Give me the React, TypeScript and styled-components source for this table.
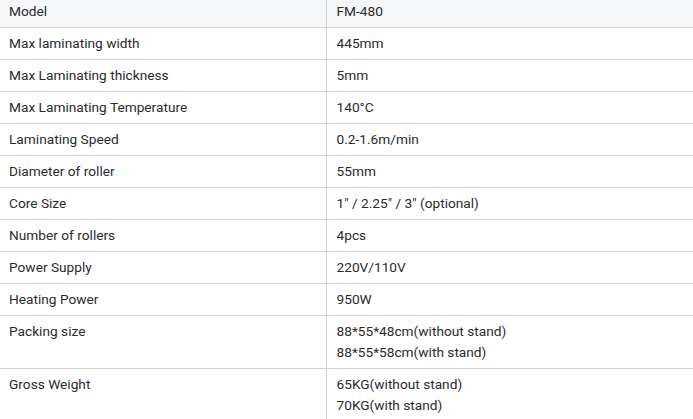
import React from "react";
import styled, { createGlobalStyle } from "styled-components";

const GlobalStyle = createGlobalStyle`
  html, body {
    margin: 0;
    padding: 0;
    background: #ffffff;
  }
  body {
    font-family: Roboto, "Liberation Sans", sans-serif;
    color: #2b2b2b;
    overflow: hidden;
  }
`;

const SpecTable = styled.table`
  width: 100%;
  margin-top: -4px;
  border-collapse: collapse;
  table-layout: fixed;
  font-size: 13.7px;
`;

const Row = styled.tr<{ $head?: boolean }>`
  background: ${(p) => (p.$head ? "#f5f6f8" : "#ffffff")};
  border-bottom: 1px solid #d3d3d3;
`;

const NameCell = styled.td`
  width: 326px;
  padding: 5px 10px 5px 9px;
  line-height: 21px;
  vertical-align: top;
  border-right: 1px solid #d3d3d3;
  box-sizing: border-box;
`;

const ValueCell = styled.td`
  padding: 5px 10px;
  line-height: 21px;
  vertical-align: top;
`;

const Line = styled.div``;

const specs: [string, string[]][] = [
  ["Model", ["FM-480"]],
  ["Max laminating width", ["445mm"]],
  ["Max Laminating thickness", ["5mm"]],
  ["Max Laminating Temperature", ["140°C"]],
  ["Laminating Speed", ["0.2-1.6m/min"]],
  ["Diameter of roller", ["55mm"]],
  ["Core Size", ['1" / 2.25" / 3" (optional)']],
  ["Number of rollers", ["4pcs"]],
  ["Power Supply", ["220V/110V"]],
  ["Heating Power", ["950W"]],
  ["Packing size", ["88*55*48cm(without stand)", "88*55*58cm(with stand)"]],
  ["Gross Weight", ["65KG(without stand)", "70KG(with stand)"]],
];

const App = () => {
  return (
    <>
      <GlobalStyle />
      <SpecTable>
        <tbody>
          {specs.map(([name, values], i) => (
            <Row key={name} $head={i === 0}>
              <NameCell>{name}</NameCell>
              <ValueCell>
                {values.map((v) => (
                  <Line key={v}>{v}</Line>
                ))}
              </ValueCell>
            </Row>
          ))}
        </tbody>
      </SpecTable>
    </>
  );
};

export default App;
